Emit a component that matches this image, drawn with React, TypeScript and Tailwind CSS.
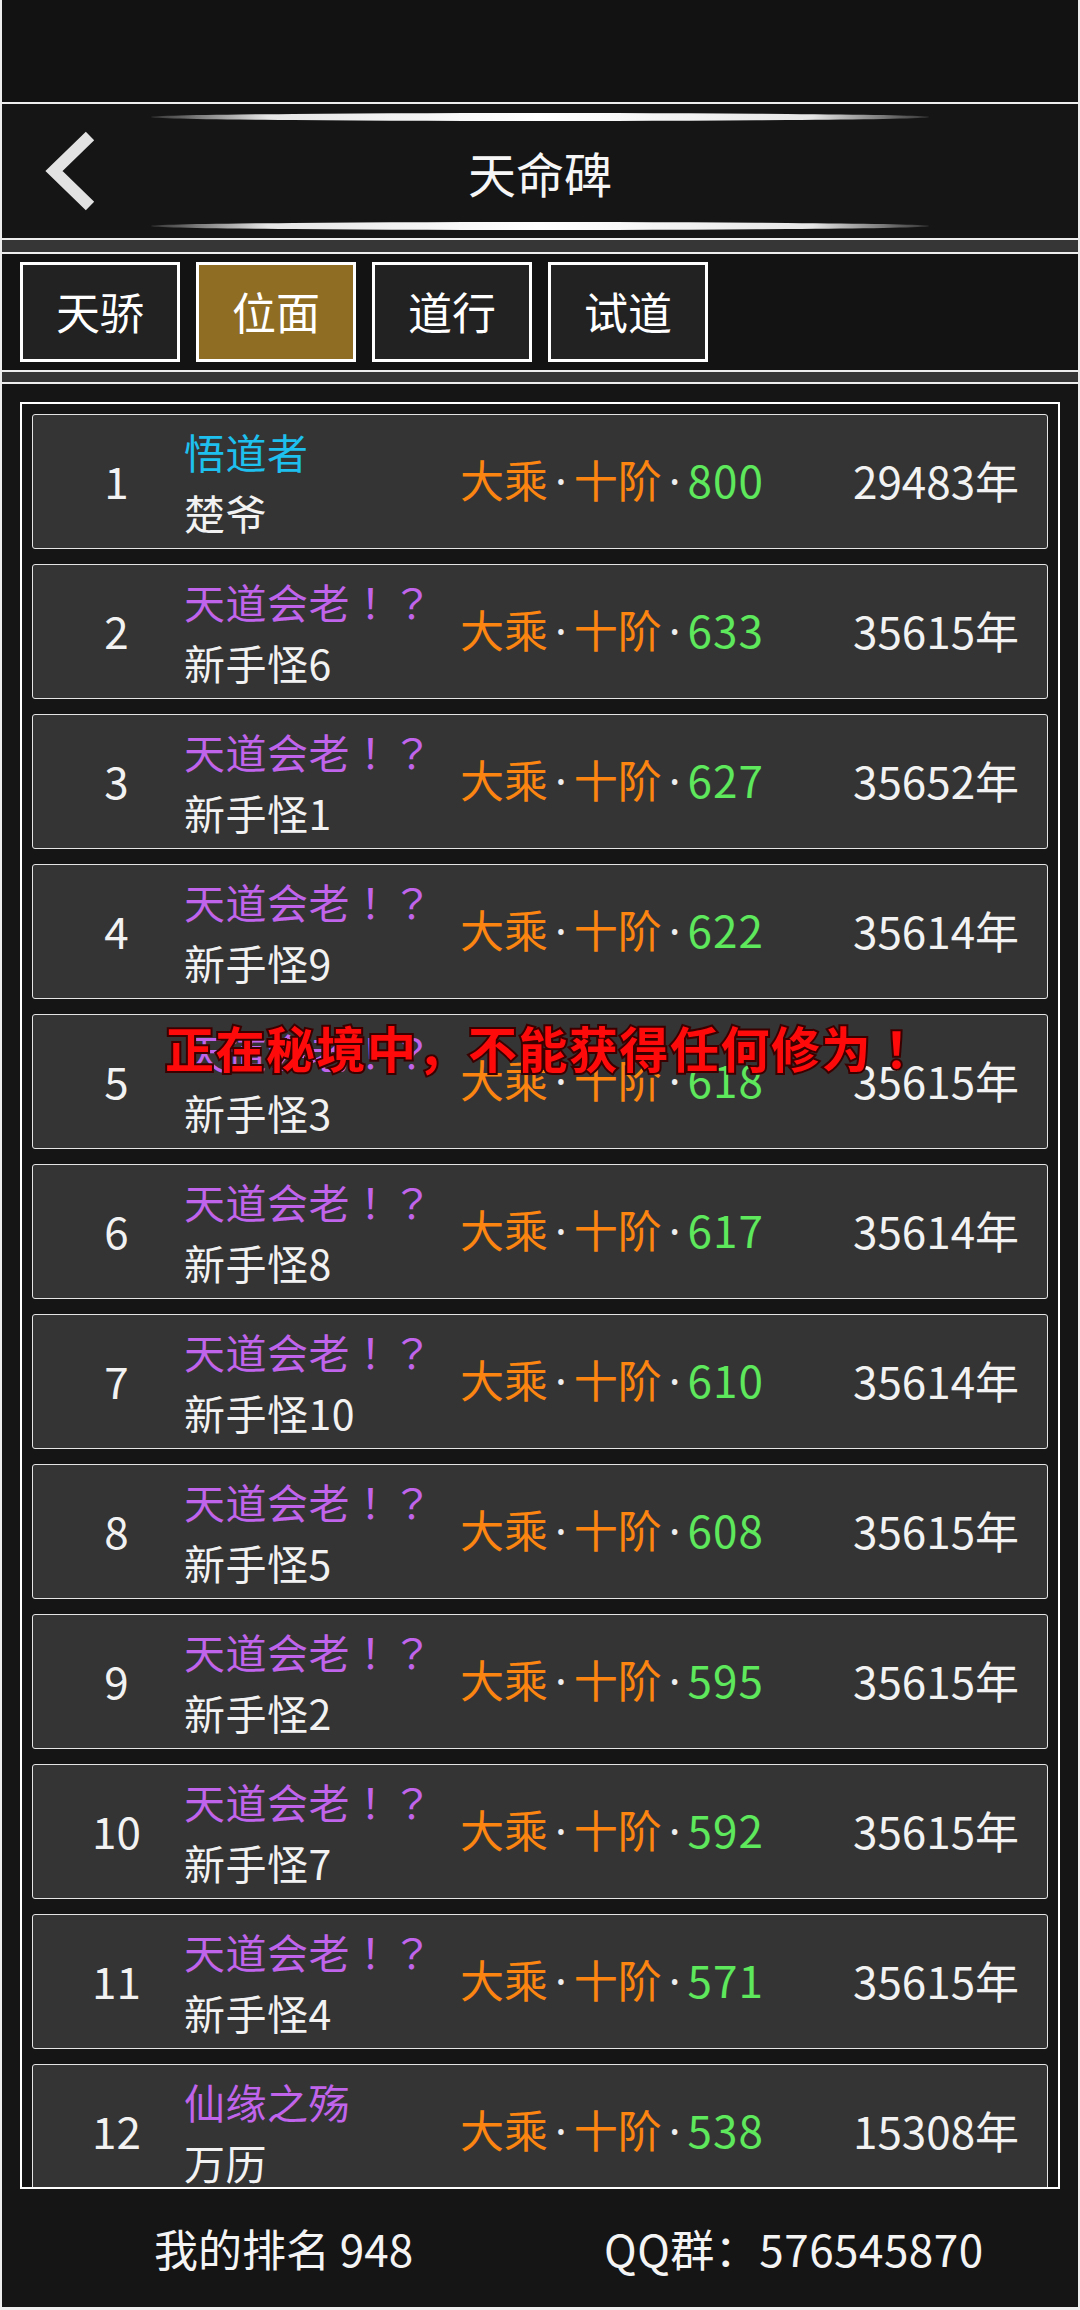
import React from 'react';

type Row = {
  rank: number;
  title: string;
  titleColor: string;
  name: string;
  level: number;
  age: number;
};

const PURPLE = 'text-[#c164ec]';

const rows: Row[] = [
  { rank: 1, title: '悟道者', titleColor: 'text-[#1dc0ef]', name: '楚爷', level: 800, age: 29483 },
  { rank: 2, title: '天道会老！？', titleColor: PURPLE, name: '新手怪6', level: 633, age: 35615 },
  { rank: 3, title: '天道会老！？', titleColor: PURPLE, name: '新手怪1', level: 627, age: 35652 },
  { rank: 4, title: '天道会老！？', titleColor: PURPLE, name: '新手怪9', level: 622, age: 35614 },
  { rank: 5, title: '天道会老！？', titleColor: PURPLE, name: '新手怪3', level: 618, age: 35615 },
  { rank: 6, title: '天道会老！？', titleColor: PURPLE, name: '新手怪8', level: 617, age: 35614 },
  { rank: 7, title: '天道会老！？', titleColor: PURPLE, name: '新手怪10', level: 610, age: 35614 },
  { rank: 8, title: '天道会老！？', titleColor: PURPLE, name: '新手怪5', level: 608, age: 35615 },
  { rank: 9, title: '天道会老！？', titleColor: PURPLE, name: '新手怪2', level: 595, age: 35615 },
  { rank: 10, title: '天道会老！？', titleColor: PURPLE, name: '新手怪7', level: 592, age: 35615 },
  { rank: 11, title: '天道会老！？', titleColor: PURPLE, name: '新手怪4', level: 571, age: 35615 },
  { rank: 12, title: '仙缘之殇', titleColor: PURPLE, name: '万历', level: 538, age: 15308 },
];

const tabs = ['天骄', '位面', '道行', '试道'];

const GlowLine = () => (
  <div className="mx-auto h-[8px] w-[778px] rounded-[50%] bg-[linear-gradient(90deg,#333_0%,#e6e6e6_15%,#ffffff_50%,#e6e6e6_85%,#333_100%)]" />
);

// narrow latin middle dot between realm parts
const Dot = () => <span className="mx-[7px] text-[#eeeeee] [font-family:'Noto_Sans',sans-serif]">·</span>;

// game font centres full-width punctuation, TC glyphs do the same
const Title = ({ text }: { text: string }) => {
  const m = text.match(/^(.*?)([！？]+)$/);
  if (!m) return <>{text}</>;
  return (
    <>
      {m[1]}
      <span className="[font-family:'Noto_Sans_CJK_TC',sans-serif]">{m[2]}</span>
    </>
  );
};

const RankRow = ({ row }: { row: Row }) => (
  <div className="flex h-[135px] shrink-0 items-center rounded-[3px] border border-[#e4e4e4] bg-[#343434]">
    <div className="ml-[16px] w-[135px] pb-[3px] text-center text-[44px] leading-none text-[#f2f2f2]">{row.rank}</div>
    <div className="flex w-[276px] flex-col text-[41px] leading-[61px] tracking-[0.5px]">
      <span className={row.titleColor}>
        <Title text={row.title} />
      </span>
      <span className="text-[#f2f2f2]">{row.name}</span>
    </div>
    <div className="w-[393px] whitespace-nowrap pb-[3px] text-[44px] leading-none">
      <span className="text-[#fb8510]">大乘</span>
      <Dot />
      <span className="text-[#fb8510]">十阶</span>
      <Dot />
      <span className="tracking-[1px] text-[#5ee85c]">{row.level}</span>
    </div>
    <div className="whitespace-nowrap pb-[3px] text-[44px] leading-none text-[#f2f2f2]">{row.age}年</div>
  </div>
);

export default function App() {
  return (
    <div className="relative flex h-[2310px] w-[1080px] flex-col gap-[2px] overflow-hidden bg-[#eeeeee] pb-[3px] [font-family:'Noto_Sans_CJK_SC','Noto_Sans',sans-serif]">
      {/* status area */}
      <div className="mx-[2px] h-[102px] shrink-0 bg-[#121212]" />

      {/* header */}
      <div className="mx-[2px] flex h-[134px] shrink-0 flex-col justify-between bg-[#151515] pt-[9px] pb-[8px]">
        <GlowLine />
        <div className="relative flex h-[80px] items-center justify-center">
          <svg className="absolute left-[36px] top-[-3px]" width="62" height="84" viewBox="0 0 62 84">
            <polyline points="52,7 16,42 52,77" fill="none" stroke="#e2e2e2" strokeWidth={12} strokeLinecap="butt" strokeLinejoin="miter" />
          </svg>
          <span className="text-[48px] leading-none text-[#f6f6f6]">天命碑</span>
        </div>
        <GlowLine />
      </div>

      <div className="mx-[2px] h-[12px] shrink-0 bg-[#363636]" />

      {/* tabs */}
      <div className="mx-[2px] flex h-[116px] shrink-0 items-center gap-[16px] bg-[#131313] pl-[18px]">
        {tabs.map((t, i) => (
          <div
            key={t}
            className={
              i === 1
                ? 'flex h-[100px] w-[160px] items-center justify-center border-[3px] border-white bg-[#8f6d22] pb-[2px] text-[44px] leading-none text-white'
                : 'flex h-[100px] w-[160px] items-center justify-center border-[3px] border-white bg-[#222222] pb-[2px] text-[44px] leading-none text-white'
            }
          >
            {t}
          </div>
        ))}
      </div>

      <div className="mx-[2px] h-[10px] shrink-0 bg-[#363636]" />

      {/* ranking list */}
      <div className="mx-[2px] flex flex-1 flex-col bg-[#151515] px-[18px] pt-[18px]">
        <div className="flex h-[1787px] flex-col gap-[15px] overflow-hidden border-2 border-white p-[10px]">
          {rows.map((r) => (
            <RankRow key={r.rank} row={r} />
          ))}
        </div>
        <div className="-mx-[18px] flex h-[118px] items-center text-[44px] leading-none text-[#f4f4f4]">
          <span className="ml-[152px] w-[450px]">我的排名 948</span>
          <span className="tracking-[0.5px]">QQ群：576545870</span>
        </div>
      </div>

      {/* toast */}
      <div className="absolute left-[165px] top-[1022px] whitespace-nowrap text-[49px] font-bold leading-[49px] tracking-[1.5px] text-[#ff0a0a] [-webkit-text-stroke:4px_#3a0000] [paint-order:stroke_fill]">
        正在秘境中，不能获得任何修为<span className="[font-family:'Noto_Sans_CJK_TC',sans-serif]">！</span>
      </div>
    </div>
  );
}
